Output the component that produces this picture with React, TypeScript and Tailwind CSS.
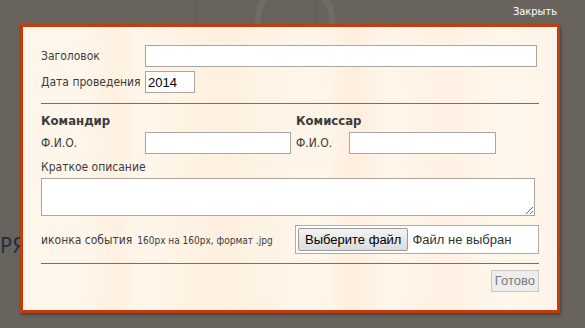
import React from "react";

export default function App() {
  const ui = { fontFamily: '"DejaVu Sans Condensed", "DejaVu Sans", Verdana, sans-serif' };
  const ctl = { fontFamily: '"Liberation Sans", Arial, sans-serif' };
  return (
    <div className="relative w-[585px] h-[328px] overflow-hidden bg-[#68645d]" style={ui}>
      {/* faint background page */}
      <div className="absolute left-[255px] top-[-20px] w-[80px] h-[80px] rounded-full border-[6px] border-[#6f7466] opacity-60" />
      <div className="absolute left-[195px] top-0 w-px h-[30px] bg-[#5e5b55]" />
      <div className="absolute left-[315px] top-0 w-px h-[30px] bg-[#5e5b55]" />
      <div className="absolute left-0 top-[232px] text-[22px] leading-[28px] text-[#23313d]" style={ui}>РЯД</div>
      <div className="absolute right-[28px] top-[4px] text-[11px] text-white">Закрыть</div>

      {/* modal */}
      <div
        className="absolute left-[20px] top-[24px] w-[540px] h-[289px] border-[3px] border-[#c23d0d] shadow-[1px_2px_3px_rgba(0,0,0,0.35)] pl-[18px] pr-[18px] pt-[18px] text-[12px] text-[#3b3b3b]"
        style={{
          background:
            "linear-gradient(90deg, #fff6eb 0px, #fff6eb 60px, #fff1e2 90px, #fff6ea 120px, #fff0df 200px, #fef3e5 240px, #fff6ea 300px, #ffeedd 330px, #fff5e9 360px, #fff2e4 430px, #fff7ec 480px, #fff3e6 540px)",
        }}
      >
        <div className="flex items-center h-[22px]">
          <span className="w-[104px]">Заголовок</span>
          <input className="w-[392px] h-[22px] border border-[#a9a59f] bg-white outline-none" />
        </div>
        <div className="flex items-center h-[22px] mt-[4px]">
          <span className="w-[104px]">Дата проведения</span>
          <input
            defaultValue="2014"
            className="w-[50px] h-[22px] border border-[#a9a59f] bg-white px-[2px] text-[13px] text-black outline-none"
            style={ctl}
          />
        </div>
        <div className="h-px bg-[#7c6d60] mt-[10px] w-[498px]" />

        <div className="flex mt-[9px]">
          <div className="w-[255px]">
            <div className="font-bold text-[13px] h-[16px] leading-[16px]">Командир</div>
            <div className="flex items-center h-[22px] mt-[3px]">
              <span className="w-[104px]">Ф.И.О.</span>
              <input className="w-[146px] h-[22px] border border-[#a9a59f] bg-white outline-none" />
            </div>
          </div>
          <div>
            <div className="font-bold text-[13px] h-[16px] leading-[16px]">Комиссар</div>
            <div className="flex items-center h-[22px] mt-[3px]">
              <span className="w-[53px]">Ф.И.О.</span>
              <input className="w-[147px] h-[22px] border border-[#a9a59f] bg-white outline-none" />
            </div>
          </div>
        </div>

        <div className="mt-[5px] h-[16px] leading-[16px]">Краткое описание</div>
        <textarea className="block w-[494px] h-[38px] mt-[3px] border border-[#a9a59f] bg-white outline-none resize-y" />

        <div className="flex items-center mt-[9px] h-[29px]">
          <span className="w-[254px] flex items-baseline">
            иконка события
            <span className="text-[10px] ml-[5px]">160px на 160px, формат .jpg</span>
          </span>
          <div className="flex items-center w-[244px] h-[29px] border border-[#b0aca6] bg-white px-[2px]" style={ctl}>
            <button className="h-[23px] px-[6px] text-[13px] text-black border border-[#9a9a9a] rounded-[2px] bg-gradient-to-b from-[#f3f3f3] to-[#dcdcdc]">
              Выберите файл
            </button>
            <span className="ml-[4px] text-[13px] text-[#333]">Файл не выбран</span>
          </div>
        </div>
        <div className="h-px bg-[#7c6d60] mt-[9px] w-[498px]" />
        <div className="flex justify-end w-[498px] mt-[6px]">
          <button
            className="h-[22px] px-[3px] text-[13px] text-[#7a7a7a] border border-[#c8c8c8] bg-[#ededed]"
            style={ctl}
          >
            Готово
          </button>
        </div>
      </div>
    </div>
  );
}
